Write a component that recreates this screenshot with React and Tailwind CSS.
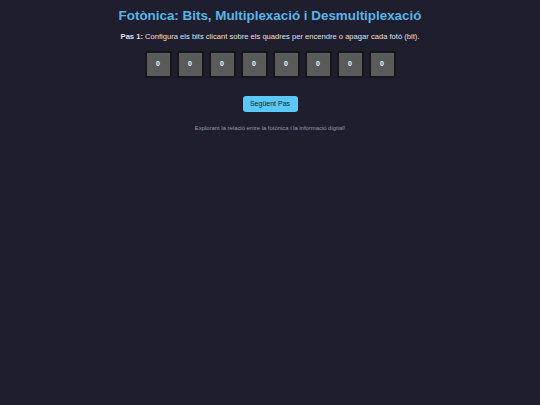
export default function App() {
  const bits = [0, 0, 0, 0, 0, 0, 0, 0];

  return (
    <div
      className="min-h-screen w-full bg-[#1e1e2f] flex flex-col items-center text-[#e0e0e0]"
      style={{ fontFamily: "'Liberation Sans', Arial, sans-serif" }}
    >
      <h1 className="mt-[8px] text-[13.4px] font-bold leading-[16px] text-[#5ab4e6]">
        Fotònica: Bits, Multiplexació i Desmultiplexació
      </h1>

      <p className="mt-[8px] text-[7.6px] leading-[10px] text-[#e0e0e0]">
        <span className="font-bold">Pas 1:</span> Configura els bits clicant sobre els quadres per encendre o apagar cada fotó (bit).
      </p>

      {/* bit cells */}
      <div className="mt-[9px] flex gap-[5px]">
        {bits.map((b, i) => (
          <button
            key={i}
            className="w-[27px] h-[27px] rounded-[2px] border-2 border-[#171717] bg-[#5a5a5a] text-white text-[7px] font-semibold flex items-center justify-center"
          >
            {b}
          </button>
        ))}
      </div>

      <button className="mt-[18px] w-[55px] h-[16px] rounded-[3px] bg-[#5ac8fa] text-[#1a1a2a] text-[7px] flex items-center justify-center">
        Següent Pas
      </button>

      <p className="mt-[12px] text-[5.9px] leading-[8px] text-[#9a9aa8]">
        Explorant la relació entre la fotònica i la informació digital!
      </p>
    </div>
  );
}
